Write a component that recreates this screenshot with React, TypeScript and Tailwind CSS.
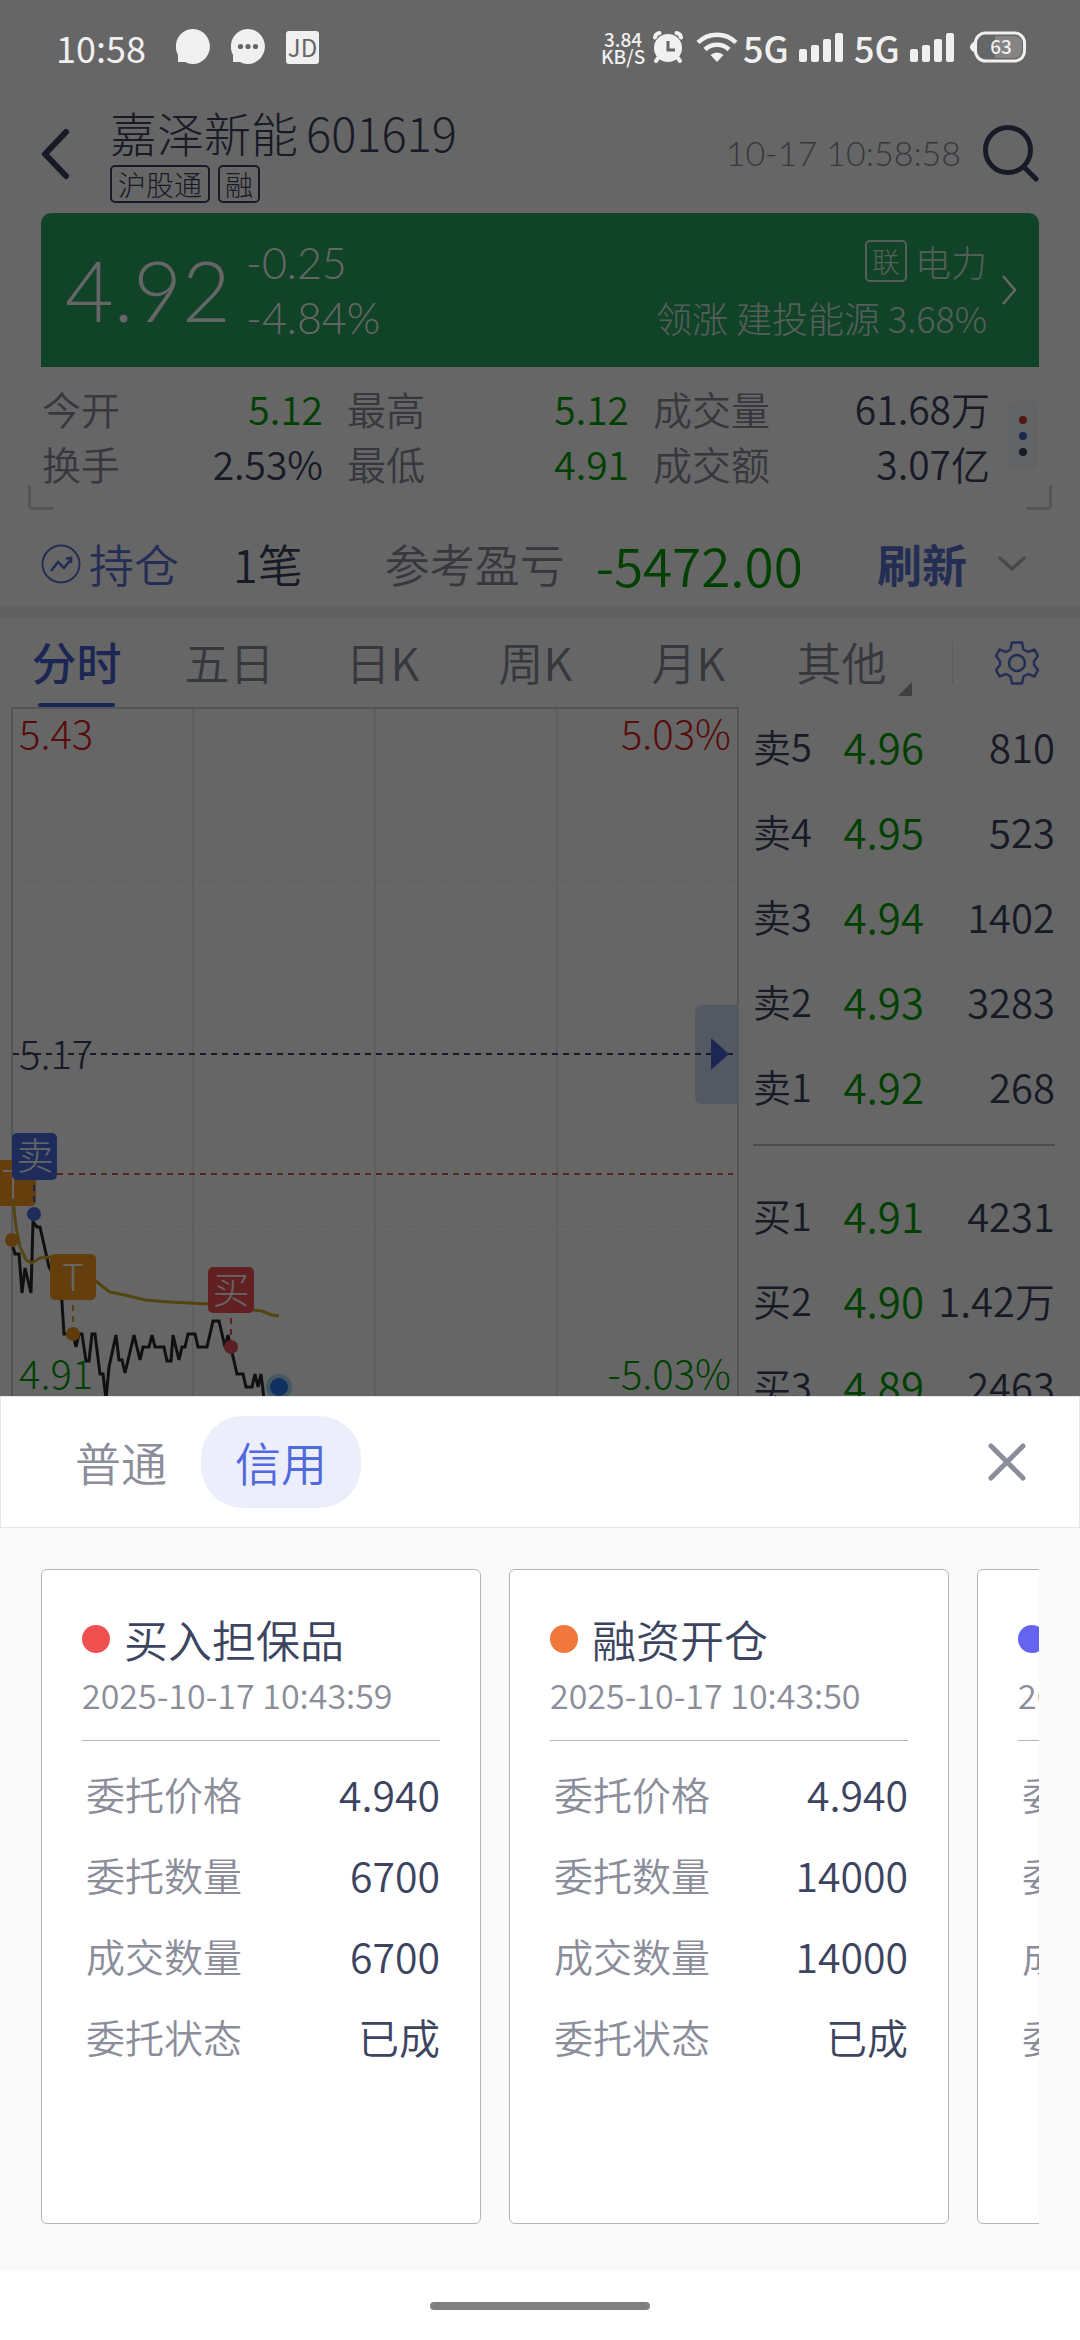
import React, { useState } from 'react';

type Quote = { label: string; value: string; tone?: string };
type Level = { label: string; price: string; volume: string };
type Order = { title: string; dot: string; time: string; rows: [string, string][] };

const QUOTES: Quote[][] = [
  [
    { label: '今开', value: '5.12', tone: 'text-[#00a000]' },
    { label: '换手', value: '2.53%' },
  ],
  [
    { label: '最高', value: '5.12', tone: 'text-[#00a000]' },
    { label: '最低', value: '4.91', tone: 'text-[#00a000]' },
  ],
  [
    { label: '成交量', value: '61.68万' },
    { label: '成交额', value: '3.07亿' },
  ],
];

const QUOTE_WIDTHS = ['w-[281px]', 'w-[282px]', 'w-[337px]'];

const PERIODS = ['分时', '五日', '日K', '周K', '月K', '其他'];

const ASKS: Level[] = [
  { label: '卖5', price: '4.96', volume: '810' },
  { label: '卖4', price: '4.95', volume: '523' },
  { label: '卖3', price: '4.94', volume: '1402' },
  { label: '卖2', price: '4.93', volume: '3283' },
  { label: '卖1', price: '4.92', volume: '268' },
];

const BIDS: Level[] = [
  { label: '买1', price: '4.91', volume: '4231' },
  { label: '买2', price: '4.90', volume: '1.42万' },
  { label: '买3', price: '4.89', volume: '2463' },
];

const ORDERS: Order[] = [
  {
    title: '买入担保品',
    dot: 'bg-[#f05050]',
    time: '2025-10-17 10:43:59',
    rows: [['委托价格', '4.940'], ['委托数量', '6700'], ['成交数量', '6700'], ['委托状态', '已成']],
  },
  {
    title: '融资开仓',
    dot: 'bg-[#f0783c]',
    time: '2025-10-17 10:43:50',
    rows: [['委托价格', '4.940'], ['委托数量', '14000'], ['成交数量', '14000'], ['委托状态', '已成']],
  },
  {
    title: '卖券还款',
    dot: 'bg-[#6464f0]',
    time: '2025-10-17 10:40:12',
    rows: [['委托价格', '4.950'], ['委托数量', '6700'], ['成交数量', '6700'], ['委托状态', '已成']],
  },
];

const Signal: React.FC = () => (
  <svg className="w-[44px] h-[29px]" viewBox="0 0 44 29" fill="#f0f0f0">
    <rect x="0" y="16" width="8" height="13" rx="2" />
    <rect x="12" y="12" width="8" height="17" rx="2" />
    <rect x="24" y="6" width="8" height="23" rx="2" />
    <rect x="36" y="0" width="8" height="29" rx="2" />
  </svg>
);

const StatusBar: React.FC = () => (
  <div className="relative z-20 h-[94px] pl-[56px] pr-[54px] flex items-center justify-between text-[#f0f0f0] font-medium">
    <div className="flex items-center">
      <span className="w-[120px] text-[36px] leading-[44px] font-normal">10:58</span>
      <svg className="w-[34px] h-[36px] mr-[21px]" viewBox="0 0 34 36" fill="#f0f0f0">
        <path d="M17 0a17 17.500 0 1 1-8 33H2v-7A17 17.500 0 0 1 17 0z" />
      </svg>
      <svg className="w-[34px] h-[36px] mr-[21px]" viewBox="0 0 34 36" fill="#f0f0f0">
        <path d="M17 0a17 17.500 0 1 1-8 33H2v-7A17 17.500 0 0 1 17 0z" />
        <g fill="#666">
          <circle cx="9.500" cy="17.500" r="2.600" />
          <circle cx="17" cy="17.500" r="2.600" />
          <circle cx="24.500" cy="17.500" r="2.600" />
        </g>
      </svg>
      <span className="size-[33px] rounded-[3px] bg-[#f0f0f0] text-[#666] text-[24px] leading-[32px] text-center font-normal">JD</span>
    </div>
    <div className="flex items-center">
      <span className="w-[44px] mr-[8px] text-[19px] leading-[17px] text-center">
        3.84
        <br />
        KB/S
      </span>
      <svg className="w-[30px] h-[33px] mr-[13px]" viewBox="0 0 30 33">
        <g stroke="#f0f0f0" strokeWidth="4" strokeLinecap="round" fill="none">
          <path d="M2 6.500Q2.500 2.500 6.500 2M28 6.500Q27.500 2.500 23.500 2M6 26l-3 4M24 26l3 4" />
        </g>
        <circle cx="15" cy="17" r="14" fill="#f0f0f0" />
        <path d="M15 10v9h7" stroke="#666" strokeWidth="3" fill="none" />
      </svg>
      <svg className="w-[42px] h-[30px] mr-[5px]" viewBox="0 0 42 30">
        <g fill="none" stroke="#f0f0f0" strokeWidth="4.500">
          <path d="M2 10.500a27 27 0 0 1 38 0" />
          <path d="M9 17.500a17.500 17.500 0 0 1 24 0" />
        </g>
        <path d="M14.500 23a9.500 9.500 0 0 1 13 0L21 30z" fill="#f0f0f0" />
      </svg>
      <span className="w-[56px] text-[36px] leading-[44px]">5G</span>
      <Signal />
      <span className="w-[56px] ml-[11px] text-[36px] leading-[44px]">5G</span>
      <Signal />
      <svg className="w-[56px] h-[32px] ml-[16px]" viewBox="0 0 56 32">
        <path d="M5 10Q0 13 0 16t5 6z" fill="#f0f0f0" />
        <rect x="5.500" y="2" width="49" height="28" rx="10" fill="none" stroke="#f0f0f0" strokeWidth="3" />
        <path d="M25 5h18q9 0 9 8v6q0 8-9 8H25z" fill="#858585" />
        <text x="31" y="23" fontSize="19" textAnchor="middle" fill="#f0f0f0">63</text>
      </svg>
    </div>
  </div>
);

const StockHeader: React.FC = () => (
  <header className="h-[119px] px-[41px] flex items-center">
    <button aria-label="返回" className="w-[69px]">
      <svg className="w-[30px] h-[52px]" viewBox="0 0 30 52" fill="none" stroke="#3c4460" strokeWidth="6" strokeLinecap="round" strokeLinejoin="round">
        <path d="M25 4L4 26l21 22" />
      </svg>
    </button>
    <div className="flex-1">
      <h1 className="text-[47px] leading-[54px] font-light">嘉泽新能<span className="ml-2">601619</span></h1>
      <div className="mt-[6px] flex gap-2 text-[28px] leading-[34px] font-light">
        <span className="px-[6px] border-2 border-[#3c4460] rounded-[5px]">沪股通</span>
        <span className="px-[5px] border-2 border-[#3c4460] rounded-[5px]">融</span>
      </div>
    </div>
    <time className="mr-[22px] pb-[2px] text-[34px] font-light text-[#8b8d9a] font-['Lato','Noto_Sans_CJK_SC',sans-serif]">10-17 10:58:58</time>
    <button aria-label="搜索">
      <svg className="w-[56px] h-[57px]" viewBox="0 0 56 57" fill="none" stroke="#3c4460" strokeWidth="5" strokeLinecap="round">
        <circle cx="25" cy="25" r="22.500" />
        <path d="M41 42l12 12" />
      </svg>
    </button>
  </header>
);

const PriceBanner: React.FC = () => (
  <section className="mx-[41px] h-[154px] pl-[24px] pr-[22px] rounded-t-[10px] bg-[#28a864] text-white font-light flex items-center">
    <div className="flex-1 flex items-center font-['Lato','Noto_Sans_CJK_SC',sans-serif]">
      <span className="w-[181px] text-[84px] leading-[100px]">4.92</span>
      <div className="text-[43px] leading-[55px]">
        <div>-0.25</div>
        <div>-4.84%</div>
      </div>
    </div>
    <div className="pb-[3px] text-[36px] leading-[56px] text-right opacity-80">
      <div className="flex items-center justify-end gap-2">
        <span className="size-[42px] border-2 rounded-[5px] text-[28px] leading-[38px] text-center">联</span>
        电力
      </div>
      <div>领涨 建投能源 3.68%</div>
    </div>
    <svg className="w-[16px] h-[30px] ml-[14px]" viewBox="0 0 16 30" fill="none" stroke="#fff" strokeWidth="2.500">
      <path d="M2 1l12 14L2 29" />
    </svg>
  </section>
);

const QuoteGrid: React.FC = () => (
  <section className="relative h-[145px] pt-[14px] pl-[42px] pr-[28px] flex">
    <div className="flex-1 flex justify-between">
      {QUOTES.map((col, i) => (
        <dl key={i} className={QUOTE_WIDTHS[i]}>
          {col.map((q) => (
            <div key={q.label} className="flex justify-between items-center leading-[55px]">
              <dt className="text-[39px] text-[#8b8d9a]">{q.label}</dt>
              <dd className={`text-[39px] ${q.tone ?? ''}`}>{q.value}</dd>
            </div>
          ))}
        </dl>
      ))}
    </div>
    <button aria-label="更多行情" className="w-[30px] h-[69px] mt-[20px] ml-[18px] mr-[14px] rounded-lg bg-[#f4f7fc] flex flex-col items-center justify-center gap-2">
      <span className="size-2 rounded-full bg-[#c83c28]" />
      <span className="size-2 rounded-full bg-[#4664c8]" />
      <span className="size-2 rounded-full bg-[#3c4460]" />
    </button>
    {/* Expand handles on the lower corners */}
    <span className="absolute left-[28px] bottom-[2px] size-[25px] border-l-3 border-b-3 rounded-bl-[5px] border-[#d2d2d2]" />
    <span className="absolute right-[28px] bottom-[2px] size-[25px] border-r-3 border-b-3 rounded-br-[5px] border-[#d2d2d2]" />
  </section>
);

const PositionRow: React.FC = () => (
  <section className="h-[95px] pl-[41px] pr-[54px] pt-[8px] flex items-center text-[45px] leading-[60px]">
    <button className="flex items-center gap-[8px] text-[#5a73d2]">
      <svg className="size-[40px]" viewBox="0 0 40 40" fill="none" stroke="#5a73d2" strokeWidth="2">
        <circle cx="20" cy="20" r="18.500" />
        <path d="M10 27l7-9 6 6 7-9M25 14.500l5-.500v5" strokeWidth="2.500" />
      </svg>
      持仓
    </button>
    <span className="ml-[54px]">1笔</span>
    <span className="ml-[82px] text-[#8b8d9a]">参考盈亏</span>
    <span className="ml-[31px] text-[53px] text-[#00a000]">-5472.00</span>
    <button className="ml-auto font-bold text-[#5a73d2]">刷新</button>
    <svg className="w-[28px] h-[16px] ml-[31px]" viewBox="0 0 28 16" fill="none" stroke="#b4b4b4" strokeWidth="3.500" strokeLinecap="round">
      <path d="M2 2l12 11L26 2" />
    </svg>
  </section>
);

const PeriodTabs: React.FC = () => (
  <nav className="h-[88px] flex items-center text-[45px]">
    <div className="flex-1 h-full grid grid-cols-6">
      {PERIODS.map((p, i) => (
        <button
          key={p}
          className={`relative pb-[2px] ${i === 0 ? 'font-medium text-[#465fd2]' : 'text-[#8b8d9a]'}`}
        >
          {p}
          {i === 0 && <span className="absolute bottom-0 inset-x-[38px] h-1 rounded-full bg-[#465fd2]" />}
          {p === '其他' && (
            <svg className="absolute right-[6px] bottom-[11px] size-[14px]" viewBox="0 0 14 14" fill="#a0a0a0">
              <path d="M14 0v14H0z" />
            </svg>
          )}
        </button>
      ))}
    </div>
    <span className="w-px h-[42px] ml-[34px] mr-[42px] bg-[#e4e4e8]" />
    <button aria-label="设置" className="mr-[41px]">
      <svg className="size-[44px]" viewBox="0 0 44 44" fill="none" stroke="#5a73d2" strokeWidth="2.500" strokeLinejoin="round">
        <path d="M17 1.500h10l1.500 7 4.500 2.500 6.500-2.500 3.500 6.500-4 5v4l4 5-3.500 6.500-6.500-2.500-4.500 2.500L27 42.500H17l-1.500-7-4.500-2.500-6.500 2.500L1 29l4-5v-4l-4-5 3.500-6.500L11 11l4.500-2.500z" />
        <circle cx="22" cy="22" r="8" />
      </svg>
    </button>
  </nav>
);

const PRICE_LINE =
  '13,540 15,547 19,547 22,586 25,561 31,586 33,515 37,520 40,520 49,560 61,580 64,627 73,627 76,640 79,627 82,627 86,654 89,654 92,627 95,627 100,667 103,667 106,692 109,660 116,628 119,653 122,653 125,666 134,628 140,653 143,640 149,640 152,628 155,640 164,640 167,654 171,654 173,628 179,653 182,640 185,640 188,627 195,627 198,640 207,640 213,614 219,614 225,640 228,628 237,667 243,667 246,680 252,680 255,667 258,680 261,667 265,700';
const AVERAGE_LINE =
  '13,492 16,520 20,540 26,553 32,556 40,551 50,550 96,574 103,580 110,585 125,588 145,593 170,595 208,597 254,603 262,604 272,608 279,609';

const IntradayChart: React.FC = () => (
  <div className="flex-1">
    <svg className="w-full" viewBox="0 0 739 700" fontSize="40" fontWeight="300">
      <g fill="none" stroke="#ebebeb" strokeWidth="2">
        <path d="M193 1V700M375 1V700M557 1V700" />
        <path d="M12 174H733M12 520H733" strokeDasharray="6 5" strokeWidth="1" />
      </g>
      <path d="M12 700V1H738V700" fill="none" stroke="#d2d2d2" strokeWidth="2" />
      <path d="M695 396V306q0-8 8-8h36v99h-36q-8 0-8-8z" fill="#d2dcf5" />
      <path d="M13 347H733" stroke="#3c4460" strokeWidth="2" strokeDasharray="6 5" />
      <path d="M57 467H733" stroke="#dc5a50" strokeWidth="2" strokeDasharray="6 5" />
      <path d="M711 331v32l18-16z" fill="#4661d2" />
      <text x="19" y="42" fill="#dc1e1e">5.43</text>
      <text x="731" y="42" textAnchor="end" fill="#dc1e1e">5.03%</text>
      <text x="19" y="362" fill="#3c4460">5.17</text>
      <text x="731" y="682" textAnchor="end" fill="#00a000">-5.03%</text>

      <rect x="-10" y="453" width="46" height="46" rx="5" fill="#fa9b1e" />
      <path d="M3 464h20M13 464v30" stroke="#fff" strokeWidth="2" />
      <polyline points={PRICE_LINE} fill="none" stroke="#2a2a2a" strokeWidth="3" />
      <polyline points={AVERAGE_LINE} fill="none" stroke="#d2aa28" strokeWidth="3" />
      <text x="19" y="682" fill="#00a000">4.91</text>
      <circle cx="12" cy="533" r="7" fill="#f0961e" />

      <path d="M34 478V496" stroke="#4664d2" strokeWidth="2" strokeDasharray="6 5" />
      <path d="M73 598V616" stroke="#f0961e" strokeWidth="2" strokeDasharray="6 5" />
      <path d="M231 611V630" stroke="#f05055" strokeWidth="2" strokeDasharray="6 5" />
      <circle cx="34" cy="507" r="7" fill="#4b6ee6" />
      <circle cx="73" cy="627" r="7" fill="#f0961e" />
      <circle cx="231" cy="640" r="7" fill="#e6505a" />
      <rect x="12" y="426" width="45" height="47" rx="5" fill="#4b6ee6" />
      <rect x="50" y="547" width="46" height="46" rx="5" fill="#fa9b1e" />
      <rect x="208" y="560" width="46" height="46" rx="5" fill="#f55055" />
      <g fill="#fff" fontSize="37" textAnchor="middle">
        <text x="35" y="463">卖</text>
        <text x="73" y="584">T</text>
        <text x="231" y="597">买</text>
      </g>
      <circle cx="279" cy="680" r="13" fill="#aadcf5" />
      <circle cx="279" cy="680" r="9" fill="#2a78f0" />
    </svg>
  </div>
);

const LevelRow: React.FC<{ level: Level }> = ({ level }) => (
  <tr className="h-[85px]">
    <th scope="row" className="w-[62px] text-left text-[38px] font-[350]">{level.label}</th>
    <td className="text-right text-[42px] text-[#00a000]">{level.price}</td>
    <td className="w-[131px] text-right text-[40px]">{level.volume}</td>
  </tr>
);

const OrderBook: React.FC = () => (
  <div className="w-[341px] -mt-[4px] pl-[14px] pr-[25px] whitespace-nowrap">
    <table className="w-full">
      <tbody>{ASKS.map((l) => <LevelRow key={l.label} level={l} />)}</tbody>
    </table>
    <hr className="mt-[16px] mb-[26px] border-t-2 border-[#bebebe]" />
    <table className="w-full">
      <tbody>{BIDS.map((l) => <LevelRow key={l.label} level={l} />)}</tbody>
    </table>
  </div>
);

const OrderCard: React.FC<{ order: Order }> = ({ order }) => (
  <article className="w-[440px] h-[655px] shrink-0 px-[40px] pt-[42px] bg-white border border-[#b4b4b9] rounded-[6px]">
    <h2 className="flex items-center gap-[14px] text-[44px] leading-[54px] whitespace-nowrap">
      <span className={`size-7 rounded-full ${order.dot}`} />
      {order.title}
    </h2>
    <time className="block h-[75px] pt-[7px] text-[34px] leading-[44px] text-[#8b8d9a] whitespace-nowrap border-b border-[#b4b4b9]">
      {order.time}
    </time>
    <dl className="pt-[12px]">
      {order.rows.map(([label, value]) => (
        <div key={label} className="h-[81px] pl-1 flex items-center justify-between">
          <dt className="text-[39px] text-[#8b8d9a]">{label}</dt>
          <dd className="text-[41px]">{value}</dd>
        </div>
      ))}
    </dl>
  </article>
);

const TradeSheet: React.FC = () => {
  const [account, setAccount] = useState('信用');

  return (
    <section className="bg-[#fafafa]">
      <div className="h-[132px] pl-[40px] pr-[52px] bg-white border border-[#e6e6e6] flex items-center">
        {['普通', '信用'].map((name) => (
          <button
            key={name}
            onClick={() => setAccount(name)}
            className={`w-[160px] h-[92px] pb-[2px] rounded-[42px] text-[46px] ${
              account === name ? 'bg-[#eceefc] text-[#5069dc]' : 'text-[#8b8d9a]'
            }`}
          >
            {name}
          </button>
        ))}
        <button aria-label="关闭" className="ml-auto">
          <svg className="size-[40px]" viewBox="0 0 40 40" fill="none" stroke="#8b8d9a" strokeWidth="5" strokeLinecap="round">
            <path d="M4 4l32 32M36 4L4 36" />
          </svg>
        </button>
      </div>
      <div className="mx-[41px] pt-[41px] pb-[47px] flex gap-7 overflow-hidden">
        {ORDERS.map((o) => <OrderCard key={o.title} order={o} />)}
      </div>
      <div className="h-[69px] bg-white flex items-center justify-center">
        <span className="w-[220px] h-2 rounded-full bg-[#808080]" />
      </div>
    </section>
  );
};

export default function App() {
  return (
    <main className="h-screen flex flex-col bg-white text-[#3c4460] font-['Noto_Sans_CJK_SC',sans-serif] font-[350]">
      <div className="relative flex-1 min-h-0 overflow-hidden">
        <StatusBar />
        <StockHeader />
        <PriceBanner />
        <QuoteGrid />
        <PositionRow />
        <div className="h-[12px] bg-[#f3f3f3]" />
        <PeriodTabs />
        <div className="flex">
          <IntradayChart />
          <OrderBook />
        </div>
        <div className="absolute inset-0 z-10 bg-black/60" />
      </div>
      <TradeSheet />
    </main>
  );
}
